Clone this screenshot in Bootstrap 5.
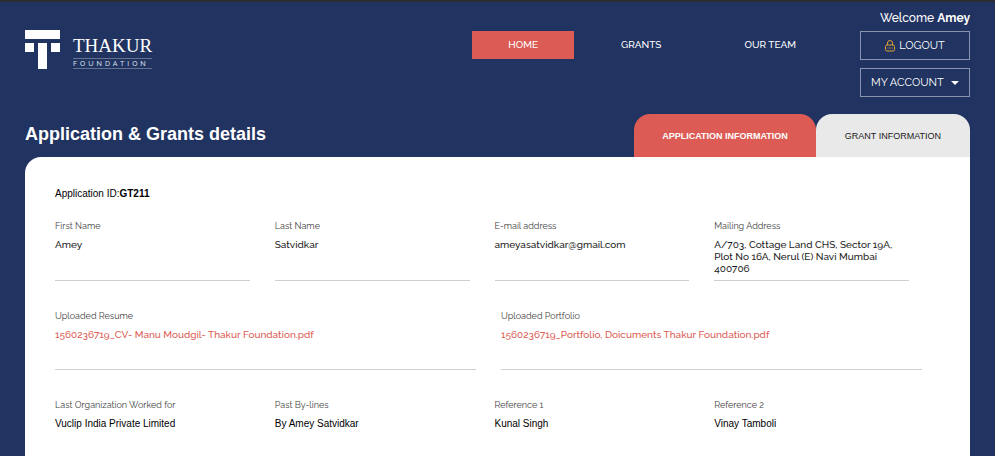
<!DOCTYPE html>
<html lang="en">
<head>
<meta charset="utf-8">
<meta name="viewport" content="width=device-width, initial-scale=1">
<title>Thakur Foundation - Application &amp; Grants details</title>
<link href="https://cdn.jsdelivr.net/npm/bootstrap@5.3.0/dist/css/bootstrap.min.css" rel="stylesheet">
<style>
  :root { --navy: #213360; --coral: #dc5c55; --raleway: Raleway, Lato, sans-serif; --arial: "Liberation Sans", Arial, sans-serif; }
  body { background: var(--navy); border-top: 2px solid #2b2f33; font: 500 10px/12px var(--raleway); color: #1c1c1c; }
  .page-wrap { padding: 0 25px; }
  .site-header { padding-top: 8px; height: 112px; }
  .brand { gap: 12px; padding-top: 20px; color: #fff; }
  .brand-name { font: 19px/20px "Liberation Serif", "Times New Roman", serif; padding-top: 6px; }
  .brand-sub { font-size: 7px; line-height: 9px; letter-spacing: 3px; color: #dde1ea; border: solid #66738f; border-width: 1px 0; margin-top: 2px; white-space: nowrap; }
  .main-nav { gap: 11px; padding-top: 21px; margin-right: 28px; }
  .main-nav .nav-link { padding: 8px 36px; color: #fff; }
  .main-nav .nav-link.active { background: var(--coral); color: #fff; }
  .account { width: 110px; color: #fff; }
  .welcome { font-size: 12px; line-height: 16px; margin-bottom: 5px; }
  .btn-outline-box { --bs-btn-color: #fff; --bs-btn-border-color: #8993ac; --bs-btn-hover-color: #fff; --bs-btn-hover-bg: #2c4175; --bs-btn-border-radius: 0; --bs-btn-padding-x: 10px; --bs-btn-padding-y: 0; --bs-btn-font-weight: 400; font-size: 11px; line-height: 16px; height: 29px; white-space: nowrap; }
  .account .btn + .btn { margin-top: 8px; }
  .dropdown-toggle::after { border-width: 4px; border-bottom: 0; margin: 0; }
  h1 { font: bold 18px/24px var(--arial); color: #fff; padding-top: 8px; }
  .info-tabs { font: 9px/12px var(--arial); }
  .info-tabs .nav-link { padding: 16px 29px 15px; border-radius: 16px 16px 0 0; background: #e9e9e9; color: #222; white-space: nowrap; }
  .info-tabs .nav-link.active { padding-left: 28px; padding-right: 28px; background: var(--coral); color: #fff; font-weight: bold; }
  .panel { background: #fff; border-radius: 16px 0 0 0; padding: 31px 30px 20px; min-height: calc(100vh - 157px); }
  .app-id { font: 10px/12px var(--arial); color: #000; margin-bottom: 20px; }
  .fields { display: grid; gap: 25px; margin: 0 0 29px; }
  .fields-four { grid-template-columns: repeat(4, 1fr); padding-right: 31px; }
  .fields-two { grid-template-columns: repeat(2, 1fr); padding-right: 18px; }
  .field-item dt { font-weight: 400; font-size: 9px; color: #444; margin-bottom: 7px; }
  .field-item dd { margin: 0; }
  .field-item a { color: var(--coral); text-decoration: none; }
  .fields-lined .field-item { border-bottom: 1px solid #cfcfcf; min-height: 60px; padding-bottom: 5px; }
  .arial-values { margin-bottom: 0; }
  .arial-values dd { font: 10px/12px var(--arial); color: #000; }
</style>
<script src="https://cdn.jsdelivr.net/npm/bootstrap@5.3.0/dist/js/bootstrap.bundle.min.js" defer></script>
</head>
<body>
<div class="page-wrap">
  <header class="site-header d-flex align-items-start">
    <a href="#" class="brand d-flex text-decoration-none me-auto" aria-label="Thakur Foundation">
      <svg width="36" height="40" viewBox="0 0 36 40" fill="#fff" aria-hidden="true"><path d="M0 0h35v9H0zM0 13h9v9H0zM26 13h9v9h-9zM13 13h9v26h-9z"/></svg>
      <span>
        <span class="brand-name d-block">THAKUR</span>
        <span class="brand-sub d-block">FOUNDATION</span>
      </span>
    </a>
    <nav class="main-nav nav flex-nowrap" aria-label="Main">
      <a class="nav-link active" aria-current="page" href="#">HOME</a>
      <a class="nav-link" href="#">GRANTS</a>
      <a class="nav-link" href="#">OUR TEAM</a>
    </nav>
    <div class="account d-flex flex-column">
      <div class="welcome text-end">Welcome <strong>Amey</strong></div>
      <button type="button" class="btn btn-outline-box d-flex align-items-center justify-content-center gap-1">
        <svg width="10" height="12" viewBox="0 0 10 12" fill="none" stroke="#e0a030" aria-hidden="true"><path d="M2.5 5V3a2.5 2.5 0 0 1 5 0v2"/><rect x=".5" y="5" width="9" height="6" rx="1.5"/><path d="M2.5 8h1m1 0h1m1 0h1"/></svg>
        LOGOUT
      </button>
      <button type="button" class="btn btn-outline-box dropdown-toggle d-flex align-items-center justify-content-between" aria-expanded="false">MY ACCOUNT</button>
    </div>
  </header>
  <main>
    <div class="d-flex justify-content-between">
      <h1 class="m-0">Application &amp; Grants details</h1>
      <div class="info-tabs nav flex-nowrap" role="tablist">
        <button type="button" class="nav-link active border-0" role="tab" aria-selected="true">APPLICATION INFORMATION</button>
        <button type="button" class="nav-link border-0" role="tab" aria-selected="false">GRANT INFORMATION</button>
      </div>
    </div>
    <section class="panel">
      <p class="app-id">Application ID:<strong>GT211</strong></p>
      <dl class="fields fields-four fields-lined">
        <div class="field-item"><dt>First Name</dt><dd>Amey</dd></div>
        <div class="field-item"><dt>Last Name</dt><dd>Satvidkar</dd></div>
        <div class="field-item"><dt>E-mail address</dt><dd>ameyasatvidkar@gmail.com</dd></div>
        <div class="field-item"><dt>Mailing Address</dt><dd>A/703, Cottage Land CHS, Sector 19A, Plot No 16A, Nerul (E) Navi Mumbai 400706</dd></div>
      </dl>
      <dl class="fields fields-two fields-lined">
        <div class="field-item"><dt>Uploaded Resume</dt><dd><a href="#">1560236719_CV- Manu Moudgil- Thakur Foundation.pdf</a></dd></div>
        <div class="field-item"><dt>Uploaded Portfolio</dt><dd><a href="#">1560236719_Portfolio, Doicuments Thakur Foundation.pdf</a></dd></div>
      </dl>
      <dl class="fields fields-four arial-values">
        <div class="field-item"><dt>Last Organization Worked for</dt><dd>Vuclip India Private Limited</dd></div>
        <div class="field-item"><dt>Past By-lines</dt><dd>By Amey Satvidkar</dd></div>
        <div class="field-item"><dt>Reference 1</dt><dd>Kunal Singh</dd></div>
        <div class="field-item"><dt>Reference 2</dt><dd>Vinay Tamboli</dd></div>
      </dl>
    </section>
  </main>
</div>
</body>
</html>
